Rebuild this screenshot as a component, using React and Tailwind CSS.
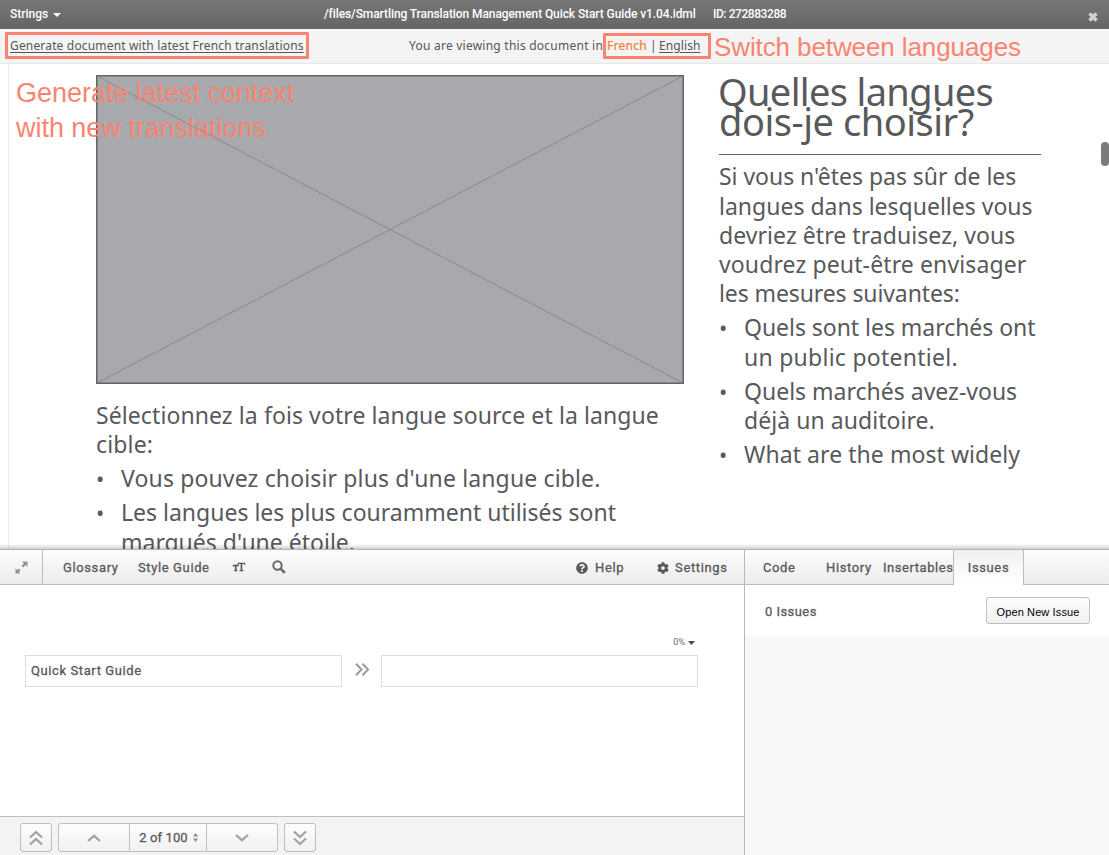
import React from "react";
import { FaQuestionCircle, FaCog } from "react-icons/fa";

const roboto = "font-['Roboto',sans-serif]";
const noto = "font-['Noto_Sans',sans-serif]";
const arial = "font-['Liberation_Sans',sans-serif]";
const semi = "[-webkit-text-stroke:0.3px_currentColor]";

function TopBar() {
  return (
    <header className={`${roboto} flex h-[29px] shrink-0 items-center bg-linear-to-b from-[#777777] to-[#656565] pb-px text-[12px] font-medium text-white`}>
      <button className="ml-[10px] flex w-[314px] items-center gap-[5px]">
        <span>Strings</span>
        <svg width="8" height="4" viewBox="0 0 8 4" className="mt-[2px]" fill="#fff"><path d="M0 0h8L4 4z" /></svg>
      </button>
      <span className="w-[389px] whitespace-nowrap tracking-[-0.09px]">/files/Smartling Translation Management Quick Start Guide v1.04.idml</span>
      <span className="whitespace-nowrap tracking-[-0.43px]">ID: 272883288</span>
      <button className="mr-[11px] mt-[5px] ml-auto" aria-label="Close">
        <svg width="10" height="10" viewBox="0 0 10 10" stroke="#d2d2d2" strokeWidth="3.6"><path d="M1.6 1.6l6.8 6.8M8.4 1.6L1.6 8.4" /></svg>
      </button>
    </header>
  );
}

function LanguageBar() {
  return (
    <div className={`${noto} relative flex h-[35px] shrink-0 items-center border-b border-[#e9e9e9] bg-[#f4f4f4] text-[12px] text-[#555657]`}>
      <a className="ml-[10px] w-[399px] whitespace-nowrap tracking-[0.165px] underline underline-offset-2">Generate document with latest French translations</a>
      <span className="w-[198px] whitespace-nowrap tracking-[0.24px]">You are viewing this document in</span>
      <span className="w-[43px] tracking-[0.25px] text-[#f08033] [-webkit-text-stroke:0.2px_currentColor]">French</span>
      <span className="w-[9px]">|</span>
      <a className="tracking-[0.1px] underline underline-offset-2">English</a>
      <div className="absolute left-[5px] top-[3px] h-[27px] w-[304px] rounded-[1px] border-3 border-[#fa8471]" />
      <div className="absolute left-[603px] top-[4px] h-[26px] w-[108px] rounded-[1px] border-3 border-[#fa8471]" />
      <div className={`${arial} absolute left-[714px] top-[3px] whitespace-nowrap text-[26px] leading-[30px] tracking-[-0.1px] text-[#fa8471]`}>Switch between languages</div>
    </div>
  );
}

function Bullet({ children }) {
  return (
    <li className="mt-[4.9px] flex">
      <span className="w-[25px] shrink-0 text-[22px]">•</span>
      <div className="whitespace-nowrap">{children}</div>
    </li>
  );
}

function Document() {
  return (
    <main className={`${noto} relative h-[485px] shrink-0 overflow-hidden bg-white text-[23px] leading-[29.2px] text-[#58595b]`}>
      <div className="ml-[8px] flex h-full border-l border-[#ebebeb] pl-[87px]">
        <section className="w-[623px] pt-[11px]">
          <svg width="588" height="309" viewBox="0 0 588 309" className="block">
            <rect x="0.75" y="0.75" width="586.5" height="307.5" fill="#a7a9ac" stroke="#636466" strokeWidth="1.5" />
            <path d="M1 1L587 308M1 308L587 1" stroke="#808285" strokeWidth="0.8" />
          </svg>
          <div className="mt-[17px] whitespace-nowrap">
            <p className="tracking-[0.09px]">Sélectionnez la fois votre langue source et la langue</p>
            <p className="tracking-[0.15px]">cible:</p>
          </div>
          <ul>
            <Bullet><p className="tracking-[0.14px]">Vous pouvez choisir plus d'une langue cible.</p></Bullet>
            <Bullet>
              <p>Les langues les plus couramment utilisés sont</p>
              <p>marqués d'une étoile.</p>
            </Bullet>
          </ul>
        </section>
        <section className="w-[322px] pt-[13px]">
          <h1 className="whitespace-nowrap text-[38px] leading-[29.6px]">
            <div className="-ml-px tracking-[-0.65px]">Quelles langues</div>
            <div className="tracking-[-0.48px]">dois-je choisir?</div>
          </h1>
          <hr className="mt-[17.8px] border-t-[1.5px] border-[#636466]" />
          <div className="mt-[7.5px] whitespace-nowrap">
            <p className="tracking-[-0.03px]">Si vous n'êtes pas sûr de les</p>
            <p>langues dans lesquelles vous</p>
            <p className="tracking-[0.06px]">devriez être traduisez, vous</p>
            <p className="tracking-[0.12px]">voudrez peut-être envisager</p>
            <p className="tracking-[-0.1px]">les mesures suivantes:</p>
          </div>
          <ul>
            <Bullet><p className="tracking-[-0.04px]">Quels sont les marchés ont</p><p className="tracking-[0.26px]">un public potentiel.</p></Bullet>
            <Bullet><p>Quels marchés avez-vous</p><p className="tracking-[0.05px]">déjà un auditoire.</p></Bullet>
            <Bullet><p className="tracking-[0.06px]">What are the most widely</p></Bullet>
          </ul>
        </section>
      </div>
      <div className={`${arial} absolute left-[16px] top-[12px] whitespace-nowrap text-[27px] leading-[35px] tracking-[-0.03px] text-[#fa8471]`}>
        Generate latest context<br />with new translations
      </div>
      <div className="absolute right-0 top-[78px] h-[24px] w-[8px] rounded-full bg-[#7b7b7b]" />
      <div className="absolute inset-x-0 bottom-0 h-[5px] bg-linear-to-b from-transparent to-[#00000030]" />
    </main>
  );
}

const bar = "flex h-[36px] items-center border-y border-t-[#b5b5b5] border-b-[#bcbcbc] bg-linear-to-b from-[#fdfdfd] to-[#ececec] text-[13px] leading-[20px] tracking-[0.62px]";

function EditorPane() {
  return (
    <section className="flex w-[745px] flex-col border-r border-[#b8b8b8] bg-white">
      <nav className={`${bar} ${semi}`}>
        <button className="flex h-full w-[43px] items-center justify-center border-r border-[#bcbcbc]" aria-label="Expand">
          <svg width="13" height="13" viewBox="0 0 13 13" fill="#929292">
            <path d="M7 0.5H12.5V6L10.6 4.1L8.2 6.4L6.6 4.8L8.9 2.4ZM0.5 7.5V12.5H5.5L3.9 10.9L5.5 9.2L3.8 7.5L2.1 9.1Z" />
          </svg>
        </button>
        <span className="ml-[20px] w-[75px] pt-[2px]">Glossary</span>
        <span className="w-[95px] pt-[2px]">Style Guide</span>
        <span className="flex w-[39px] items-baseline pt-px font-['Liberation_Serif',serif] tracking-[-0.5px] text-[#444]">
          <span className="text-[8px] font-bold">T</span><span className="text-[12px]">T</span>
        </span>
        <svg width="14" height="14" viewBox="0 0 14 14" fill="none" stroke="#66676a" strokeWidth="2"><circle cx="5.5" cy="5.5" r="4.2" /><path d="M8.6 8.6L12.8 12.8" strokeWidth="2.6" /></svg>
        <span className="ml-[290px] flex items-center gap-[7px] pt-[2px]"><FaQuestionCircle size={12} />Help</span>
        <span className="ml-[33px] flex items-center gap-[6px] pt-[2px]"><FaCog size={12} />Settings</span>
      </nav>
      <div className="flex-1 px-[25px] pt-[51px]">
        <div className="flex h-[14px] w-[670px] items-center justify-end gap-[3px] text-[9px] text-[#6b6b6b]">
          0%
          <svg width="7" height="4" viewBox="0 0 7 4" fill="#4a4a4a"><path d="M0 0h7L3.5 4z" /></svg>
        </div>
        <div className="mt-[5px] flex items-center">
          <div className={`${semi} flex h-[32px] w-[317px] items-center border border-[#dedede] pl-[5px] text-[13px] tracking-[0.6px]`}>Quick Start Guide</div>
          <svg width="15" height="13" viewBox="0 0 15 13" className="mr-[11px] mb-[4px] ml-[13px]" fill="none" stroke="#9b9b9b" strokeWidth="2"><path d="M1 .7L6.5 6.5L1 12.3M7.5 .7L13 6.5L7.5 12.3" /></svg>
          <div className="h-[32px] w-[317px] border border-[#dedede]" />
        </div>
      </div>
      <Pager />
    </section>
  );
}

const key = "flex h-[29px] items-center justify-center border border-[#bfbfbf] bg-linear-to-b from-[#fdfdfd] to-[#f1f1f1]";

function Chevrons({ d, h }) {
  return (
    <svg width="14" height={h} viewBox={`0 0 14 ${h}`} fill="none" stroke="#a3a3a3" strokeWidth="2.3"><path d={d} /></svg>
  );
}

function Pager() {
  return (
    <footer className="flex h-[39px] items-start gap-[6px] border-t border-[#bcbcbc] bg-[#f3f3f3] pt-[6px] pl-[20px]">
      <button className={`${key} w-[32px] rounded-[3px]`}><Chevrons h={16} d="M1 7.5L7 2L13 7.5M1 14.5L7 9L13 14.5" /></button>
      <div className="flex">
        <button className={`${key} w-[72px] rounded-l-[3px]`}><Chevrons h={8} d="M1 7L7 1.8L13 7" /></button>
        <div className={`${key} ${semi} -ml-px w-[78px] gap-[5px] pl-px text-[13px] tracking-[0.12px]`}>
          2 of 100
          <svg width="5" height="9" viewBox="0 0 5 9" fill="#8a8a8a"><path d="M0 3.5L2.5 0L5 3.5zM0 5.5H5L2.5 9z" /></svg>
        </div>
        <button className={`${key} -ml-px w-[72px] rounded-r-[3px]`}><Chevrons h={8} d="M1 1L7 6.2L13 1" /></button>
      </div>
      <button className={`${key} w-[32px] rounded-[3px]`}><Chevrons h={16} d="M1 1.5L7 7L13 1.5M1 8.5L7 14L13 8.5" /></button>
    </footer>
  );
}

function IssuesPane() {
  return (
    <section className="flex flex-1 flex-col bg-[#f8f8f8]">
      <nav className={`${bar} ${semi}`}>
        <span className="ml-[18px] w-[63px] pt-[2px]">Code</span>
        <span className="w-[57px] pt-[2px]">History</span>
        <span className="w-[70px] pt-[2px] tracking-[0.55px]">Insertables</span>
        <span className="flex h-[35px] w-[71px] items-center justify-center self-start border-x border-[#bcbcbc] bg-linear-to-b from-[#f0f0f0] to-white">Issues</span>
      </nav>
      <div className="flex h-[51px] items-center justify-between bg-white pr-[19px] pl-[20px]">
        <span className={`${semi} pt-[2px] text-[13px] tracking-[0.45px]`}>0 Issues</span>
        <button className={`${arial} h-[27px] w-[104px] rounded-[3px] border border-[#bfbfbf] bg-linear-to-b from-[#fdfdfd] to-[#f1f1f1] pt-[3px] text-[11px] tracking-[0.12px] text-black`}>Open New Issue</button>
      </div>
    </section>
  );
}

export default function App() {
  return (
    <div className="flex h-[855px] w-[1109px] flex-col overflow-hidden bg-white">
      <TopBar />
      <LanguageBar />
      <Document />
      <div className={`${roboto} flex flex-1 text-[#58595b]`}>
        <EditorPane />
        <IssuesPane />
      </div>
    </div>
  );
}
